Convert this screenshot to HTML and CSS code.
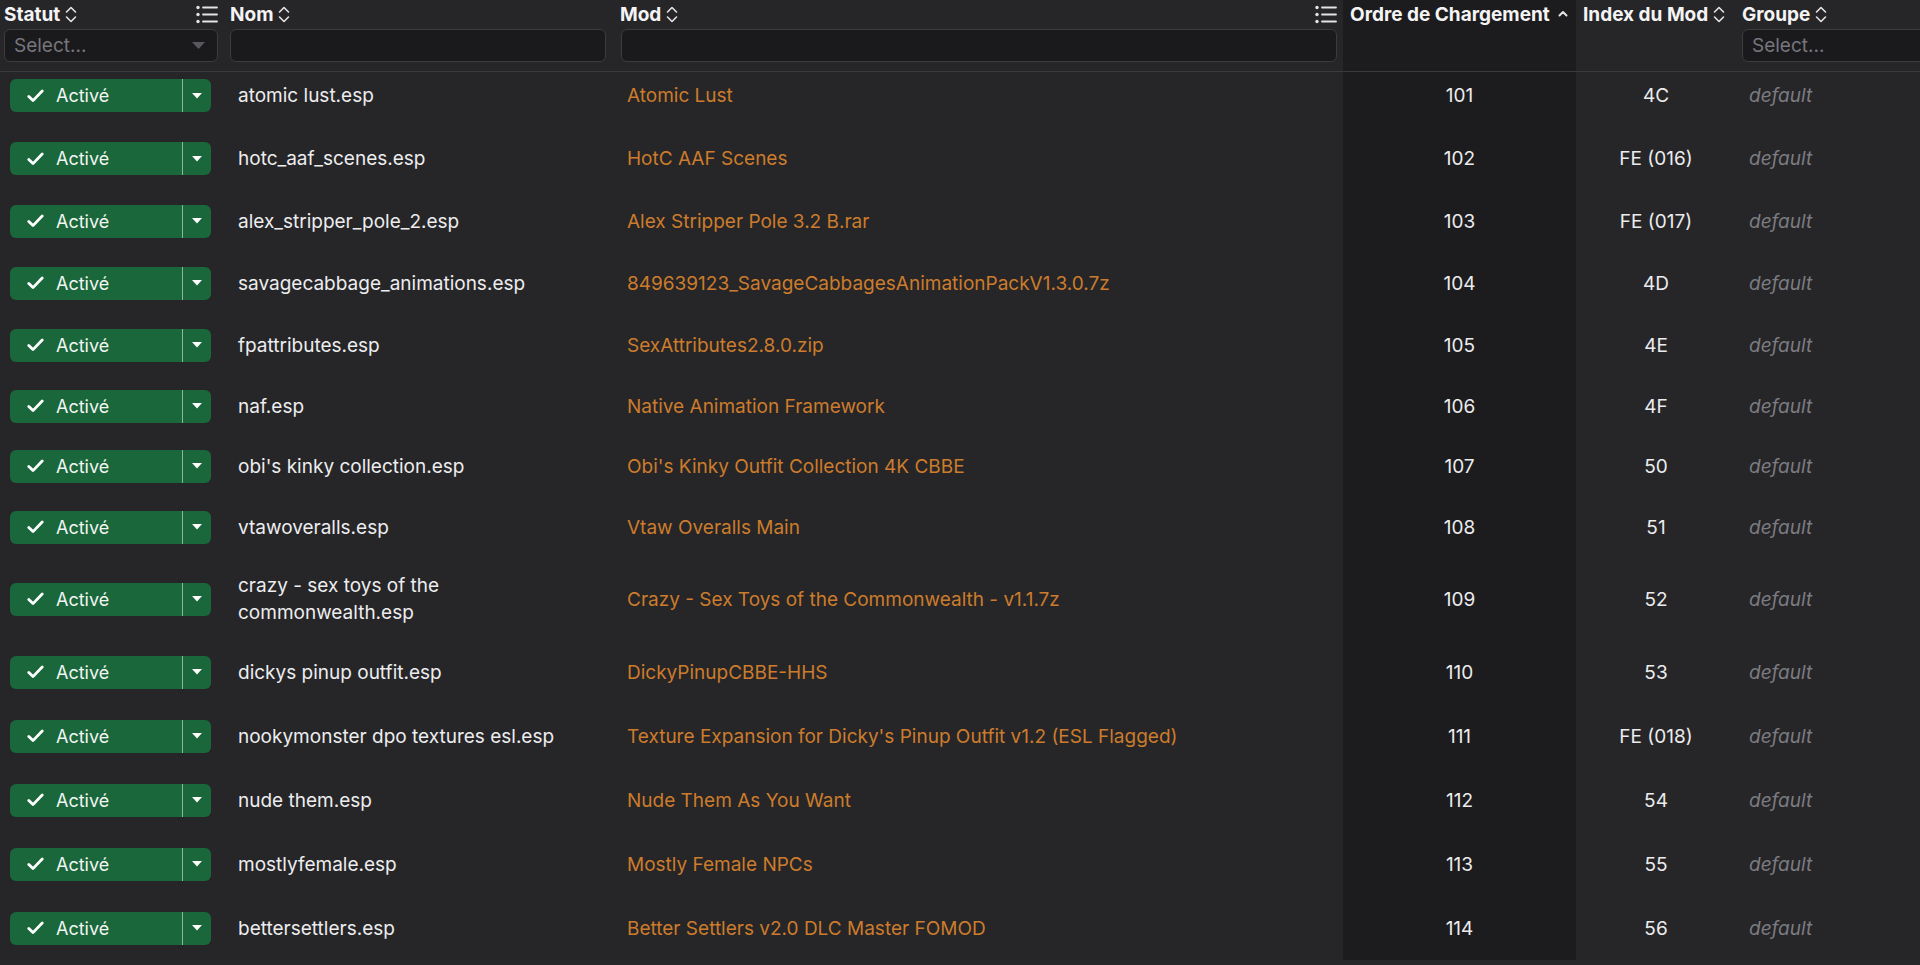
FILE: index.html
```
<!DOCTYPE html>
<html>
<head>
    <title>Plugins</title>
    <link rel="stylesheet" href="styles.css">
</head>
<body>

<div class="plugin-table">
    <div class="thead">
        <div class="th col-status">
            <div class="th-title">
                <span class="th-label">Statut <svg class="sort" width="12" height="17" viewBox="0 0 12 17"><path d="M1.5 6 L6 1.5 L10.5 6 M1.5 11 L6 15.5 L10.5 11"/></svg></span>
                <svg class="list-icon" width="22" height="19" viewBox="0 0 22 19"><circle cx="2" cy="2.5" r="1.7"/><circle cx="2" cy="9.5" r="1.7"/><circle cx="2" cy="16.5" r="1.7"/><path d="M7 2.5 H21 M7 9.5 H21 M7 16.5 H21"/></svg>
            </div>
            <div class="filter select">
                <span class="placeholder">Select...</span>
                <svg width="13" height="7" viewBox="0 0 13 7"><polygon points="0,0 13,0 6.5,7"/></svg>
            </div>
        </div>
        <div class="th col-name">
            <div class="th-title">
                <span class="th-label">Nom <svg class="sort" width="12" height="17" viewBox="0 0 12 17"><path d="M1.5 6 L6 1.5 L10.5 6 M1.5 11 L6 15.5 L10.5 11"/></svg></span>
            </div>
            <div class="filter"></div>
        </div>
        <div class="th col-mod">
            <div class="th-title">
                <span class="th-label">Mod <svg class="sort" width="12" height="17" viewBox="0 0 12 17"><path d="M1.5 6 L6 1.5 L10.5 6 M1.5 11 L6 15.5 L10.5 11"/></svg></span>
                <svg class="list-icon" width="22" height="19" viewBox="0 0 22 19"><circle cx="2" cy="2.5" r="1.7"/><circle cx="2" cy="9.5" r="1.7"/><circle cx="2" cy="16.5" r="1.7"/><path d="M7 2.5 H21 M7 9.5 H21 M7 16.5 H21"/></svg>
            </div>
            <div class="filter"></div>
        </div>
        <div class="th col-order">
            <div class="th-title">
                <span class="th-label">Ordre de Chargement <svg class="caret-up" width="10" height="7" viewBox="0 0 10 7"><path d="M1.5 5.5 L5 2 L8.5 5.5"/></svg></span>
            </div>
        </div>
        <div class="th col-index">
            <div class="th-title">
                <span class="th-label">Index du Mod <svg class="sort" width="12" height="17" viewBox="0 0 12 17"><path d="M1.5 6 L6 1.5 L10.5 6 M1.5 11 L6 15.5 L10.5 11"/></svg></span>
            </div>
        </div>
        <div class="th col-group">
            <div class="th-title">
                <span class="th-label">Groupe <svg class="sort" width="12" height="17" viewBox="0 0 12 17"><path d="M1.5 6 L6 1.5 L10.5 6 M1.5 11 L6 15.5 L10.5 11"/></svg></span>
            </div>
            <div class="filter select">
                <span class="placeholder">Select...</span>
            </div>
        </div>
    </div>
    <div class="tbody" id="pluginRows"></div>
</div>

<script>
    const plugins = [
        { name: 'atomic lust.esp', mod: 'Atomic Lust', order: 101, index: '4C', size: 'top' },
        { name: 'hotc_aaf_scenes.esp', mod: 'HotC AAF Scenes', order: 102, index: 'FE (016)', size: 'top' },
        { name: 'alex_stripper_pole_2.esp', mod: 'Alex Stripper Pole 3.2 B.rar', order: 103, index: 'FE (017)' },
        { name: 'savagecabbage_animations.esp', mod: '849639123_SavageCabbagesAnimationPackV1.3.0.7z', order: 104, index: '4D' },
        { name: 'fpattributes.esp', mod: 'SexAttributes2.8.0.zip', order: 105, index: '4E' },
        { name: 'naf.esp', mod: 'Native Animation Framework', order: 106, index: '4F', size: 'short' },
        { name: "obi's kinky collection.esp", mod: "Obi's Kinky Outfit Collection 4K CBBE", order: 107, index: '50', size: 'short' },
        { name: 'vtawoveralls.esp', mod: 'Vtaw Overalls Main', order: 108, index: '51' },
        { name: 'crazy - sex toys of the commonwealth.esp', mod: 'Crazy - Sex Toys of the Commonwealth - v1.1.7z', order: 109, index: '52', size: 'tall' },
        { name: 'dickys pinup outfit.esp', mod: 'DickyPinupCBBE-HHS', order: 110, index: '53', size: 'wide' },
        { name: 'nookymonster dpo textures esl.esp', mod: "Texture Expansion for Dicky's Pinup Outfit v1.2 (ESL Flagged)", order: 111, index: 'FE (018)', size: 'wide' },
        { name: 'nude them.esp', mod: 'Nude Them As You Want', order: 112, index: '54', size: 'wide' },
        { name: 'mostlyfemale.esp', mod: 'Mostly Female NPCs', order: 113, index: '55', size: 'wide' },
        { name: 'bettersettlers.esp', mod: 'Better Settlers v2.0 DLC Master FOMOD', order: 114, index: '56', size: 'wide' }
    ];

    const rows = document.getElementById('pluginRows');
    plugins.forEach(p => {
        const row = document.createElement('div');
        row.className = 'row' + (p.size ? ' ' + p.size : '');
        row.innerHTML = `
            <div class="td col-status">
                <div class="status-btn">
                    <span class="status-main">
                        <svg width="17" height="14" viewBox="0 0 17 14"><path d="M1.8 7.4 L6 11.6 L15.2 2"/></svg>
                        Activé
                    </span>
                    <span class="status-menu"><svg width="10" height="6" viewBox="0 0 10 6"><polygon points="0,0 10,0 5,5.5"/></svg></span>
                </div>
            </div>
            <div class="td col-name">${p.name}</div>
            <div class="td col-mod"><span class="mod-link">${p.mod}</span></div>
            <div class="td col-order">${p.order}</div>
            <div class="td col-index">${p.index}</div>
            <div class="td col-group"><span class="group">default</span></div>
        `;
        rows.appendChild(row);
    });
</script>

</body>
</html>
```

FILE: styles.css
```
body {
    margin: 0;
    background-color: #262628;
    color: #ececee;
    font-family: 'Inter', 'Noto Sans', sans-serif;
    font-size: 19px;
    overflow: hidden;
}
.plugin-table {
    width: 2000px;
}
.thead,
.row {
    display: grid;
    grid-template-columns: 224px 388px 731px 233px 160px 264px;
}
.thead {
    position: sticky;
    top: 0;
    z-index: 2;
    height: 71px;
    background-color: #262628;
    border-bottom: 1px solid #3a3a3d;
}
.th {
    padding: 0 6px 0 4px;
    color: #f4f4f5;
    font-weight: 700;
}
.th.col-name {
    padding-left: 6px;
}
.th.col-mod {
    padding-left: 8px;
}
.th.col-order,
.th.col-index {
    padding-left: 7px;
}
.th.col-group {
    padding-left: 6px;
    padding-right: 0;
}
.th-title {
    display: flex;
    align-items: center;
    justify-content: space-between;
    height: 29px;
    line-height: 29px;
}
.th-label {
    display: flex;
    align-items: center;
    gap: 5px;
    white-space: nowrap;
}
.sort path,
.caret-up path {
    fill: none;
    stroke: #e4e4e7;
    stroke-width: 1.6;
    stroke-linecap: round;
    stroke-linejoin: round;
}
.caret-up path {
    stroke-width: 2;
}
.caret-up {
    margin-left: 3px;
    margin-bottom: 2px;
}
.list-icon circle {
    fill: #e4e4e7;
}
.list-icon path {
    stroke: #e4e4e7;
    stroke-width: 1.8;
    stroke-linecap: round;
}
.filter {
    height: 33px;
    box-sizing: border-box;
    background-color: #1a1a1c;
    border: 1px solid #3c3c40;
    border-radius: 6px;
    display: flex;
    align-items: center;
    justify-content: space-between;
    padding: 0 12px 0 9px;
    font-weight: 400;
}
.th.col-mod .filter {
    margin-left: 1px;
}
.placeholder {
    color: #76767c;
}
.filter polygon {
    fill: #58585e;
}
.col-order {
    background-color: #1c1c1e;
}

/* body rows */
.tbody {
    margin-top: -8px;
}
.row {
    height: 62px;
}
.row.top {
    height: 63px;
}
.row.short {
    height: 60px;
}
.row.tall {
    height: 82px;
}
.row.wide {
    height: 64px;
}
.td {
    display: flex;
    align-items: center;
    line-height: 27px;
}
.td.col-status {
    padding-left: 10px;
}
.td.col-name {
    padding: 0 6px 0 14px;
    color: #ededef;
}
.td.col-mod {
    padding-left: 15px;
}
.td.col-order,
.td.col-index {
    justify-content: center;
}
.td.col-group {
    padding-left: 13px;
}
.mod-link {
    color: #cc7c2c;
}
.group {
    color: #7c7c82;
    font-style: italic;
}
.status-btn {
    display: flex;
    width: 201px;
    height: 33px;
    background-color: #19673a;
    border-radius: 6px;
    color: #f2f5f2;
    font-size: 18px;
}
.status-main {
    display: flex;
    align-items: center;
    gap: 12px;
    width: 173px;
    padding-left: 17px;
    box-sizing: border-box;
    border-right: 1px solid #8fb69c;
}
.status-main path {
    fill: none;
    stroke: #ffffff;
    stroke-width: 2.8;
    stroke-linecap: round;
    stroke-linejoin: round;
}
.status-menu {
    flex: 1;
    display: flex;
    align-items: center;
    justify-content: center;
}
.status-menu polygon {
    fill: #ffffff;
}
```
